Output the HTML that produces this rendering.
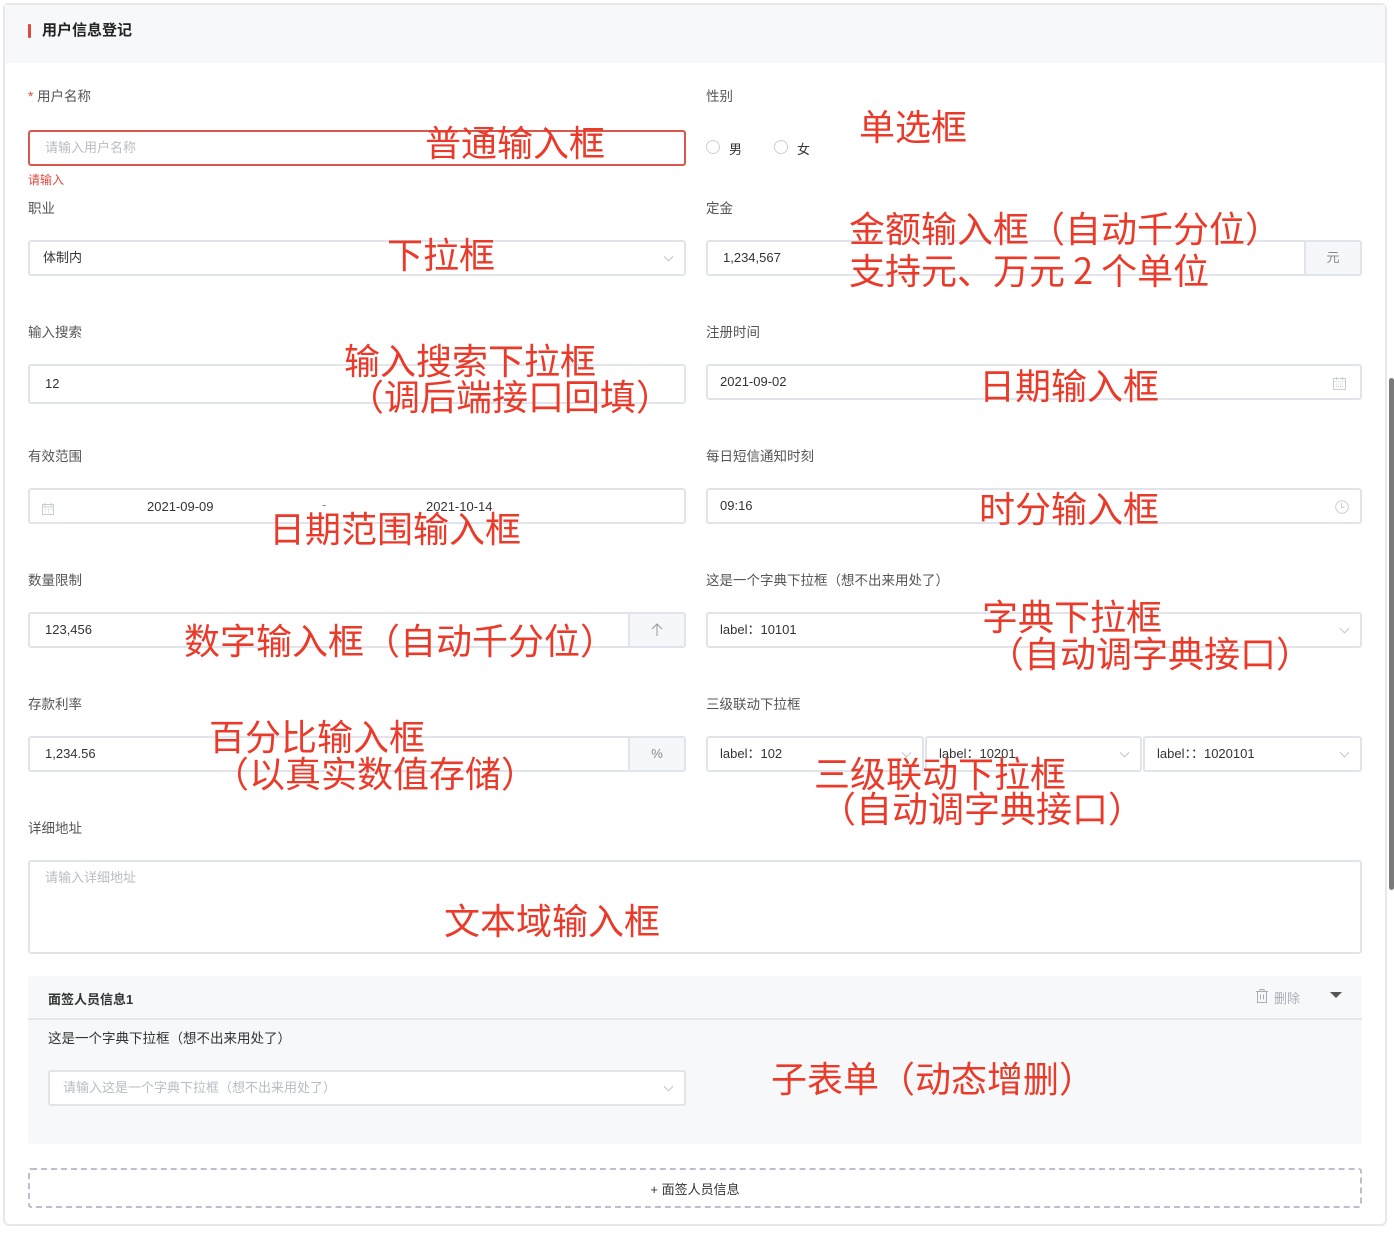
<!DOCTYPE html>
<html><head><meta charset="utf-8"><style>
*{box-sizing:border-box;margin:0;padding:0}
body{width:1394px;height:1234px;background:#fff;position:relative;overflow:hidden;font-family:"Liberation Sans","Noto Sans CJK SC",sans-serif;font-size:13px;color:#333}
.a{position:absolute}
.card{left:3px;top:3px;width:1384px;height:1223px;border:2px solid #e6e8ed;border-radius:6px;background:#fff}
.hd{left:5px;top:5px;width:1380px;height:58px;background:#f7f8fa}
.lb{color:#555;font-size:13.5px;line-height:16px}
.in{border:2px solid #e1e4ea;border-radius:3px;background:#fff;line-height:16px;padding-left:15px;display:flex;align-items:center}
.ph{color:#b8bcc4}
.an{color:#ea3a2a;font-family:"Noto Sans CJK SC",sans-serif;font-size:36px;line-height:40px;white-space:nowrap;font-weight:400}
.chev{position:absolute;right:12px;top:50%;width:7px;height:7px;border-right:1px solid #c0c4cc;border-bottom:1px solid #c0c4cc;transform:translateY(-70%) rotate(45deg)}
.addon{position:absolute;right:0;top:0;bottom:0;width:56px;background:#f5f7fa;border-left:2px solid #e1e4ea;color:#888;display:flex;align-items:center;justify-content:center}
</style></head><body>
<div class="a card"></div>
<div class="a hd"></div>
<div class="a" style="left:28px;top:24px;width:3px;height:14px;background:#e0483a;border-radius:1px"></div>
<div class="a" style="left:42px;top:21px;font-size:15px;font-weight:bold;color:#222;line-height:20px">用户信息登记</div>

<div class="a lb" style="left:28px;top:89px"><span style="color:#e0483a">*</span> 用户名称</div>
<div class="a in" style="left:28px;top:130px;width:658px;height:36px;border-color:#d9574b"><span class="ph">请输入用户名称</span></div>
<div class="a" style="left:28px;top:171px;color:#e0483a;font-size:12px">请输入</div>

<div class="a lb" style="left:28px;top:201px">职业</div>
<div class="a in" style="left:28px;top:240px;width:658px;height:36px;padding-left:13px">体制内<i class="chev"></i></div>

<div class="a lb" style="left:28px;top:325px">输入搜索</div>
<div class="a in" style="left:28px;top:364px;width:658px;height:40px">12</div>

<div class="a lb" style="left:28px;top:449px">有效范围</div>
<div class="a in" style="left:28px;top:488px;width:658px;height:36px">
<svg class="a" style="left:12px;top:13px" width="12" height="12" viewBox="0 0 12 12" fill="none" stroke="#c8ccd3"><rect x="0.5" y="1.5" width="11" height="10"/><path d="M0.5 4h11M3 0v3M9 0v3M3 6.5h1M6 6.5h1M9 6.5h1M3 9h1M6 9h1"/></svg>
<span class="a" style="left:117px;top:9px">2021-09-09</span><span class="a" style="left:292px;top:7px;color:#888">-</span><span class="a" style="left:396px;top:9px">2021-10-14</span></div>

<div class="a lb" style="left:28px;top:573px">数量限制</div>
<div class="a in" style="left:28px;top:612px;width:658px;height:36px">123,456<div class="addon"><svg width="12" height="14" viewBox="0 0 12 14" fill="none" stroke="#999"><path d="M6 13V1M1 6l5-5 5 5"/></svg></div></div>

<div class="a lb" style="left:28px;top:697px">存款利率</div>
<div class="a in" style="left:28px;top:736px;width:658px;height:36px">1,234.56<div class="addon">%</div></div>

<div class="a lb" style="left:28px;top:821px">详细地址</div>
<div class="a in" style="left:28px;top:860px;width:1334px;height:94px;align-items:flex-start;padding-top:8px"><span class="ph">请输入详细地址</span></div>

<div class="a lb" style="left:706px;top:89px">性别</div>
<div class="a" style="left:706px;top:140px;width:14px;height:14px;border:1px solid #ccd0d7;border-radius:50%"></div>
<div class="a" style="left:729px;top:139px">男</div>
<div class="a" style="left:774px;top:140px;width:14px;height:14px;border:1px solid #ccd0d7;border-radius:50%"></div>
<div class="a" style="left:797px;top:139px">女</div>

<div class="a lb" style="left:706px;top:201px">定金</div>
<div class="a in" style="left:706px;top:240px;width:656px;height:36px;padding-left:15px">1,234,567<div class="addon">元</div></div>

<div class="a lb" style="left:706px;top:325px">注册时间</div>
<div class="a in" style="left:706px;top:364px;width:656px;height:36px;padding-left:12px">2021-09-02
<svg class="a" style="right:14px;top:11px" width="13" height="13" viewBox="0 0 13 13" fill="none" stroke="#c8ccd3"><rect x="0.5" y="1.5" width="12" height="11"/><path d="M0.5 4.5h12M3.5 0v3M9.5 0v3M3 7h7M3 9.5h7" stroke-dasharray="1 1"/></svg></div>

<div class="a lb" style="left:706px;top:449px">每日短信通知时刻</div>
<div class="a in" style="left:706px;top:488px;width:656px;height:36px;padding-left:12px">09:16
<svg class="a" style="right:11px;top:10px" width="14" height="14" viewBox="0 0 14 14" fill="none" stroke="#c8ccd3"><circle cx="7" cy="7" r="6.3"/><path d="M6.5 3v4.5h3"/></svg></div>

<div class="a lb" style="left:706px;top:573px">这是一个字典下拉框（想不出来用处了）</div>
<div class="a in" style="left:706px;top:612px;width:656px;height:36px;padding-left:12px">label：10101<i class="chev"></i></div>

<div class="a lb" style="left:706px;top:697px">三级联动下拉框</div>
<div class="a in" style="left:706px;top:736px;width:218px;height:36px;padding-left:12px">label：102<i class="chev"></i></div>
<div class="a in" style="left:925px;top:736px;width:217px;height:36px;padding-left:12px">label：10201<i class="chev"></i></div>
<div class="a in" style="left:1143px;top:736px;width:219px;height:36px;padding-left:12px">label：：1020101<i class="chev"></i></div>

<div class="a" style="left:28px;top:976px;width:1334px;height:168px;background:#f7f8fa;border-radius:4px"></div>
<div class="a" style="left:28px;top:1018px;width:1334px;height:2px;background:#e6e8ed"></div>
<div class="a" style="left:48px;top:989px;font-weight:bold;color:#333">面签人员信息1</div>
<svg class="a" style="left:1256px;top:989px" width="12" height="14" viewBox="0 0 12 14" fill="none" stroke="#a8adb6"><path d="M0 2.5h12M4 2.5V0.5h4v2M1.5 2.5v11h9v-11M4.5 5.5v5M7.5 5.5v5"/></svg>
<div class="a" style="left:1274px;top:988px;color:#a8adb6">删除</div>
<div class="a" style="left:1330px;top:992px;width:0;height:0;border-left:6px solid transparent;border-right:6px solid transparent;border-top:6px solid #555"></div>
<div class="a lb" style="left:48px;top:1031px;color:#333">这是一个字典下拉框（想不出来用处了）</div>
<div class="a in" style="left:48px;top:1070px;width:638px;height:36px;padding-left:13px"><span class="ph">请输入这是一个字典下拉框（想不出来用处了）</span><i class="chev"></i></div>

<div class="a" style="left:28px;top:1168px;width:1334px;height:40px;border:2px dashed #b9bed0;border-radius:3px;display:flex;align-items:center;justify-content:center;color:#333">+ 面签人员信息</div>

<div class="a" style="left:1389px;top:378px;width:5px;height:512px;background:#7a7a7a;border-radius:3px"></div>

<div class="a an" style="left:425px;top:121px">普通输入框</div>
<div class="a an" style="left:859px;top:105px">单选框</div>
<div class="a an" style="left:849px;top:207px">金额输入框（自动千分位）</div>
<div class="a an" style="left:849px;top:249px">支持元、万元 2 个单位</div>
<div class="a an" style="left:387px;top:233px">下拉框</div>
<div class="a an" style="left:344px;top:339px">输入搜索下拉框</div>
<div class="a an" style="left:348px;top:375px">（调后端接口回填）</div>
<div class="a an" style="left:979px;top:364px">日期输入框</div>
<div class="a an" style="left:269px;top:507px">日期范围输入框</div>
<div class="a an" style="left:979px;top:487px">时分输入框</div>
<div class="a an" style="left:184px;top:619px">数字输入框（自动千分位）</div>
<div class="a an" style="left:982px;top:595px">字典下拉框</div>
<div class="a an" style="left:988px;top:632px">（自动调字典接口）</div>
<div class="a an" style="left:209px;top:715px">百分比输入框</div>
<div class="a an" style="left:213px;top:752px">（以真实数值存储）</div>
<div class="a an" style="left:814px;top:752px">三级联动下拉框</div>
<div class="a an" style="left:820px;top:787px">（自动调字典接口）</div>
<div class="a an" style="left:444px;top:899px">文本域输入框</div>
<div class="a an" style="left:771px;top:1057px">子表单（动态增删）</div>
</body></html>
